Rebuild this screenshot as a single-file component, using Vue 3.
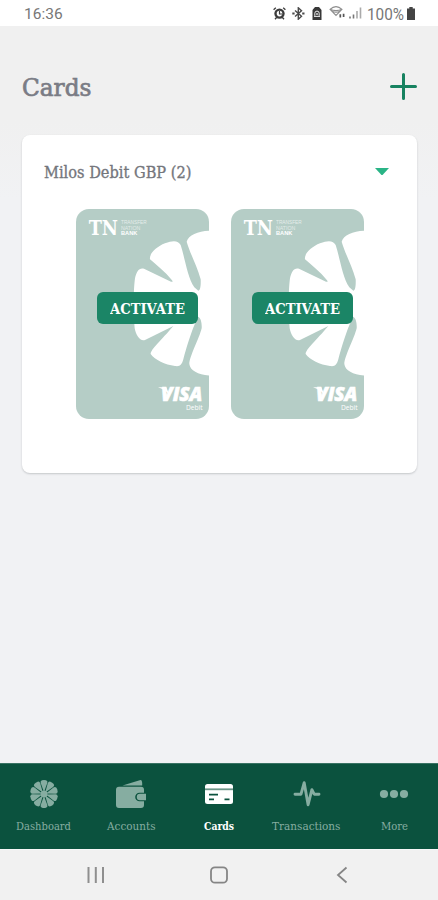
<script setup>
const cards = [1, 2]
const tabs = [
  { name: 'Dashboard', w: 55 },
  { name: 'Accounts', w: 48.5 },
  { name: 'Cards', w: 30, active: true },
  { name: 'Transactions', w: 68.5 },
  { name: 'More', w: 27 },
]
const spokes = [0, 36, 72, 108, 144, 180, 216, 252, 288, 324]
</script>

<template>
  <div class="screen">
    <header class="status">
      <span class="time">16:36</span>
      <div class="indicators">
        <svg class="alarm" width="13" height="13" viewBox="0 0 13 13" fill="none" stroke="#3c3c3c">
          <path d="M.6 2.800L2.800 .8M10.200 .8l2.200 2M2 12.300l1.800-2M11 12.300l-1.800-2" stroke-width="1.300" />
          <circle cx="6.500" cy="6.600" r="4" stroke-width="2.400" />
          <path d="M6.500 4v3h2.600" stroke-width="1.200" />
        </svg>
        <svg class="bluetooth" width="13" height="13" viewBox="0 0 13 13" fill="none" stroke="#4a4a4a" stroke-width="1.400">
          <path d="M3 3.500l6.500 5.800-3.200 2.900V.8l3.200 2.900L3 9.500" />
          <path d="M.3 6.500h2.300M10.200 6.500h2.300" stroke-width="1.800" />
        </svg>
        <svg class="saver" width="10" height="13" viewBox="0 0 10 13">
          <path d="M3 0h4l2.500 3v10h-9V3z" fill="#383838" />
          <path d="M2.800 8.800V6.300a2.200 2.200 0 0 1 4.400 0v2.500M2 9.400h6" fill="none" stroke="#eee" />
          <path d="M4 6h2v2H4z" fill="#aaa" />
        </svg>
        <svg class="wifi" width="17" height="14" viewBox="0 0 17 14" fill="none" stroke="#8d8d8d" stroke-width="1.100">
          <path d="M1 4.300q6-5.500 12 0L7 10.500zM1 4.300q6 2.600 12 0M3.500 6.500q3.500 1.500 7 0" />
          <path d="M11.300 9.300v3.200M14.600 8.800v3.200" stroke="#555" stroke-width="1.700" />
        </svg>
        <svg class="signal" width="13" height="12" viewBox="0 0 13 12" stroke-width="1.600">
          <path d="M1 9.500v2M4.500 7.500v4" stroke="#777" />
          <path d="M8 4v7.500M11.500 .5v11" stroke="#aaa" />
        </svg>
        <svg class="percent" width="38" height="18" viewBox="0 0 38 18">
          <text x="0" y="14" textLength="37" lengthAdjust="spacingAndGlyphs">100%</text>
        </svg>
        <svg class="battery" width="8" height="13" viewBox="0 0 8 13">
          <path d="M2.300 0h3.400v1.500H8V13H0V1.500h2.300z" fill="#444" />
        </svg>
      </div>
    </header>

    <main>
      <div class="heading">
        <svg class="slab title" width="72" height="32" viewBox="0 0 72 32">
          <text x="0" y="24.500" textLength="69.500" lengthAdjust="spacingAndGlyphs">Cards</text>
        </svg>
        <svg width="27" height="27" viewBox="0 0 27 27" stroke="#178260" stroke-width="3" stroke-linecap="round">
          <path d="M13.500 1.500v24M1.500 13.500h24" />
        </svg>
      </div>

      <section class="panel">
        <div class="account">
          <svg class="slab account-name" width="152" height="24" viewBox="0 0 152 24">
            <text x="0" y="17.500" textLength="147.500" lengthAdjust="spacingAndGlyphs">Milos Debit GBP (2)</text>
          </svg>
          <svg width="14" height="8" viewBox="0 0 14 8"><path d="M0 0h14L8 6.500q-1 1-2 0z" fill="#2ab486" /></svg>
        </div>
        <div class="cards">
          <div v-for="card in cards" :key="card" class="card">
            <svg class="art" width="133" height="210" viewBox="33 27 399 630">
              <path
                fill="#fff"
                d="M434 92V527C400 524 375 512 373 492C373 470 403 415 410 385C411 370 408 355 400 350C385 375 365 440 355 478C350 495 345 500 330 498C300 494 270 480 257 462C257 448 290 420 325 378L240 420C225 425 213 405 209 385C205 340 205 270 210 235C214 215 222 202 237 206L318 245q8 2 3-4C300 215 275 195 255 178C252 160 275 140 300 130C325 120 340 122 347 135C360 175 368 235 388 262L400 272C405 272 408 260 407 238C395 195 375 160 365 125C370 105 400 93 434 92Z"
              />
              <g fill="#fff">
                <text class="brand" x="71" y="106" textLength="88" lengthAdjust="spacingAndGlyphs">TN</text>
                <g class="tagline">
                  <text x="168" y="73" textLength="77" lengthAdjust="spacingAndGlyphs" opacity=".65">TRANSFER</text>
                  <text x="168" y="89" textLength="58" lengthAdjust="spacingAndGlyphs" opacity=".6">NATION</text>
                  <text x="168" y="105" textLength="49" lengthAdjust="spacingAndGlyphs" font-weight="bold">BANK</text>
                </g>
                <text class="visa" x="288" y="604" textLength="124" lengthAdjust="spacingAndGlyphs">VISA</text>
                <path d="M279 562h25l9 22q-14-16-34-22" />
                <text class="debit" x="363" y="629" textLength="50" lengthAdjust="spacingAndGlyphs">Debit</text>
              </g>
            </svg>
            <button class="activate">
              <svg class="slab" width="78" height="24" viewBox="0 0 78 24">
                <text x="0" y="17.500" textLength="75" lengthAdjust="spacingAndGlyphs">ACTIVATE</text>
              </svg>
            </button>
          </div>
        </div>
      </section>
    </main>

    <nav class="tabs">
      <a v-for="tab in tabs" :key="tab.name" class="tab" :class="{ active: tab.active }">
        <svg v-if="tab.name === 'Dashboard'" width="30" height="30" viewBox="-15 -15 30 30">
          <path
            v-for="angle in spokes"
            :key="angle"
            :transform="`rotate(${angle})`"
            d="M0-2L-3.300-11Q-4-13-2-13.700Q0-14.300 2-13.700Q4-13 3.300-11Z"
            fill="currentColor"
          />
          <circle r="3.500" fill="currentColor" />
        </svg>
        <svg v-else-if="tab.name === 'Accounts'" width="30" height="30" viewBox="0 0 30 30" fill="currentColor">
          <path d="M6.500 6.500L24.500 1q2 0 1.700 5.500z" />
          <path d="M3 7.700h22q3 0 3 3v3h-4.500a4.300 4.300 0 0 0 0 8.600H28V26q0 3-3 3H3q-3 0-3-3V10.700q0-3 3-3z" />
          <path d="M24 14.700h6v6.500h-6a3.250 3.250 0 0 1 0-6.500z" />
        </svg>
        <svg v-else-if="tab.name === 'Cards'" width="30" height="30" viewBox="0 0 30 30">
          <rect x="1" y="5" width="28" height="20" rx="2.500" fill="currentColor" />
          <path d="M1 10.300h28" stroke="#6c9688" stroke-width="1.800" />
          <path d="M5 15.700h9M5 20.300h5M20.500 20.300h5" stroke="#0b523e" stroke-width="1.800" />
        </svg>
        <svg v-else-if="tab.name === 'Transactions'" width="30" height="30" viewBox="0 0 30 30" fill="none" stroke="currentColor" stroke-width="2.900" stroke-linejoin="round" stroke-linecap="round">
          <path d="M3 15.200h6l3.200-11.500 3.900 22 3.800-15 2.300 4.500H27" />
        </svg>
        <svg v-else width="30" height="30" viewBox="0 0 30 30" fill="currentColor">
          <circle cx="5" cy="15" r="4.100" /><circle cx="15" cy="15" r="4.100" /><circle cx="25" cy="15" r="4.100" />
        </svg>
        <svg class="slab label" :width="tab.w" height="16" :viewBox="`0 0 ${tab.w} 16`">
          <text x="0" y="12" :textLength="tab.w" lengthAdjust="spacingAndGlyphs">{{ tab.name }}</text>
        </svg>
      </a>
    </nav>

    <footer class="system">
      <svg width="18" height="18" viewBox="0 0 18 18" stroke="#8f8f8f" stroke-width="2"><path d="M1.500 1v16M8.800 1v16M16 1v16" /></svg>
      <svg width="18" height="18" viewBox="0 0 18 18" fill="none" stroke="#858585" stroke-width="1.800"><rect x="1" y="1.300" width="16" height="15.400" rx="4" /></svg>
      <svg width="18" height="18" viewBox="0 0 18 18" fill="none" stroke="#858585" stroke-width="1.800"><path d="M13.500 1.500L5 9l8.500 7.500" /></svg>
    </footer>
  </div>
</template>

<style>
body {
  margin: 0;
}
</style>

<style scoped>
.screen {
  width: 438px;
  height: 900px;
  display: flex;
  flex-direction: column;
  overflow: hidden;
  background: linear-gradient(#f0f0f0 120px, #f1f2f4 200px);
  font-family: Roboto, sans-serif;
}
svg {
  display: block;
  flex: none;
}
.slab text,
.brand {
  font-family: "Roboto Slab", "DejaVu Serif", serif;
}
.status {
  height: 26px;
  box-sizing: border-box;
  padding: 3px 23px 0 24px;
  display: flex;
  justify-content: space-between;
  background: #fff;
}
.time {
  font-size: 15.500px;
  line-height: 23px;
  color: #777;
}
.indicators {
  display: flex;
  align-items: flex-start;
  padding-top: 4px;
}
.bluetooth {
  margin-left: 6px;
}
.saver {
  margin-left: 7px;
}
.wifi {
  margin-left: 7px;
  margin-top: -2px;
}
.signal {
  margin-left: 3px;
}
.percent {
  margin: -1px 2px 0 5px;
  overflow: visible;
  font-size: 16px;
  fill: #777;
}
main {
  flex: 1;
  padding: 0 21px 0 22px;
}
.heading {
  height: 109px;
  box-sizing: border-box;
  padding: 12px 0 0;
  display: flex;
  align-items: center;
  justify-content: space-between;
}
.title {
  font-size: 24px;
  fill: #7a7c85;
  stroke: #7a7c85;
  stroke-width: 0.7px;
}
.panel {
  height: 338px;
  box-sizing: border-box;
  padding: 25px 0 0;
  border-radius: 8px;
  background: #fff;
  box-shadow: 0 1px 2px rgba(40, 50, 55, 0.22);
}
.account {
  display: flex;
  align-items: center;
  justify-content: space-between;
  padding: 0 28px 0 22px;
}
.account-name {
  overflow: visible;
  font-size: 16.500px;
  fill: #74767c;
  stroke: #74767c;
  stroke-width: 0.35px;
}
.cards {
  display: flex;
  gap: 22px;
  padding: 25px 0 0 54px;
}
.card {
  position: relative;
  width: 133px;
  height: 210px;
  border-radius: 13px;
  background: #b5cdc6;
}
.brand {
  font-size: 62px;
  font-weight: bold;
}
.tagline {
  font-family: "Liberation Sans", sans-serif;
  font-size: 13.500px;
}
.visa {
  font-family: "Open Sans", sans-serif;
  font-size: 58px;
  font-style: italic;
  font-weight: 800;
  stroke: #fff;
  stroke-width: 2px;
}
.debit {
  font-family: "Open Sans", sans-serif;
  font-size: 20px;
}
.activate {
  position: absolute;
  left: 21px;
  top: 83px;
  width: 101px;
  height: 32px;
  padding: 0 0 0 13px;
  border: 0;
  border-radius: 6px;
  background: #1b8566;
  font-size: 15.500px;
  font-weight: bold;
}
.activate text {
  fill: #fff;
}
.tabs {
  height: 86px;
  box-sizing: border-box;
  padding-top: 15px;
  display: grid;
  grid-template-columns: repeat(5, 1fr);
  background: #0b523e;
  border-top: 1px solid #397363;
}
.tab {
  display: flex;
  flex-direction: column;
  align-items: center;
  color: #86ada1;
}
.label {
  margin-top: 9px;
  overflow: visible;
  font-size: 10.500px;
  fill: currentColor;
}
.active {
  color: #fff;
}
.active .label {
  font-weight: bold;
}
.system {
  height: 51px;
  box-sizing: border-box;
  border-top: 1px solid #f8f8f8;
  display: flex;
  align-items: center;
  gap: 105px;
  padding-left: 87px;
  background: #f1f1f1;
}
</style>
